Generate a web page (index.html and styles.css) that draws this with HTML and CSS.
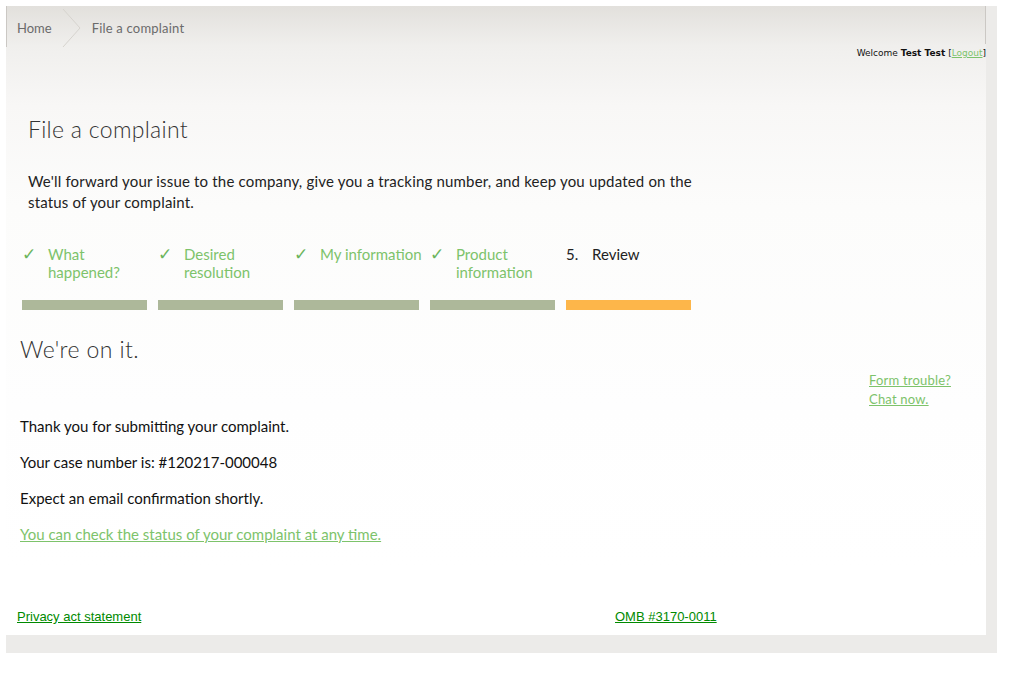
FILE: index.html
```html
<!DOCTYPE html>
<html lang="en">
<head>
    <meta charset="UTF-8">
    <title>File a complaint</title>
    <link rel="stylesheet" href="styles.css">
</head>
<body>
    <div class="frame">
        <div class="main">
            <div class="header">
                <div class="breadcrumb">
                    <a class="crumb" href="#">Home</a>
                    <svg class="crumb-sep" width="20" height="38" viewBox="0 0 20 38">
                        <polyline points="1,0 18,19 1,38" fill="none" stroke="#d6d3ce" stroke-width="1"/>
                    </svg>
                    <span class="crumb current">File a complaint</span>
                </div>
                <div class="welcome">Welcome <b>Test Test</b> [<a href="#">Logout</a>]</div>
            </div>

            <div class="intro">
                <h1>File a complaint</h1>
                <p>We'll forward your issue to the company, give you a tracking number, and keep you updated on the status of your complaint.</p>
            </div>

            <div class="steps">
                <div class="step done"><span class="mark">&#10003;</span><span class="label">What happened?</span><div class="bar"></div></div>
                <div class="step done"><span class="mark">&#10003;</span><span class="label">Desired resolution</span><div class="bar"></div></div>
                <div class="step done"><span class="mark">&#10003;</span><span class="label">My information</span><div class="bar"></div></div>
                <div class="step done"><span class="mark">&#10003;</span><span class="label">Product information</span><div class="bar"></div></div>
                <div class="step current"><span class="mark">5.</span><span class="label">Review</span><div class="bar"></div></div>
            </div>

            <div class="content">
                <div class="result">
                    <h2>We're on it.</h2>
                    <p>Thank you for submitting your complaint.</p>
                    <p>Your case number is: #120217-000048</p>
                    <p>Expect an email confirmation shortly.</p>
                    <p><a class="status-link" href="#">You can check the status of your complaint at any time.</a></p>
                </div>
                <div class="help">
                    <a href="#">Form trouble?</a>
                    <a href="#">Chat now.</a>
                </div>
            </div>

            <div class="footer">
                <a class="privacy" href="#">Privacy act statement</a>
                <a class="omb" href="#">OMB #3170-0011</a>
            </div>
        </div>
        <div class="bottom"></div>
    </div>
</body>
</html>
```

FILE: styles.css
```css
body {
    margin: 0;
    background-color: #fff;
    font-family: Lato, "Open Sans", sans-serif;
    color: #111;
}
.frame {
    margin: 6px 0 0 6px;
    width: 991px;
    background-color: #ecebe9;
}
.main {
    width: 980px;
    background: linear-gradient(#e2e0dc 0px, #f0efed 40px, #f8f7f6 100px, #fcfcfb 200px, #fefefe 400px, #fff 560px);
}
.header {
    height: 70px;
    position: relative;
}
.breadcrumb {
    display: flex;
    align-items: center;
    height: 38px;
    padding-top: 3px;
    border-left: 1px solid #cbc8c4;
}
.crumb {
    font-size: 13px;
    color: #6b6b6b;
    text-decoration: none;
    padding: 0 12px 0 10px;
}
.crumb-sep {
    display: block;
    margin-left: -2px;
}
.crumb.current {
    padding-left: 10px;
    letter-spacing: 0.2px;
}
.header::after {
    content: "";
    position: absolute;
    right: 0;
    top: 0;
    height: 38px;
    border-right: 1px solid #cbc8c4;
}
.welcome {
    text-align: right;
    padding-top: 1px;
    font-family: "DejaVu Sans", Verdana, sans-serif;
    font-size: 9px;
    color: #111;
}
.welcome a {
    color: #7cc36b;
}
.intro {
    padding: 39px 0 0 22px;
    width: 700px;
}
.intro h1 {
    font-size: 23px;
    font-weight: 300;
    letter-spacing: 0.3px;
    color: #333;
    margin: 0 0 28px 0;
}
.intro p {
    font-size: 15px;
    line-height: 21px;
    letter-spacing: 0.18px;
    color: #222;
    margin: 0;
}
.steps {
    display: flex;
    padding: 32px 0 0 16px;
}
.step {
    width: 136px;
    display: grid;
    grid-template-columns: 26px 1fr;
    font-size: 15px;
    line-height: 18px;
}
.step .mark {
    color: #6cb55d;
    font-family: "DejaVu Sans", sans-serif;
    font-size: 17px;
    font-weight: bold;
}
.step .label {
    color: #7dc36b;
    height: 36px;
    padding-right: 4px;
}
.step.current .mark {
    font-family: Lato, sans-serif;
    font-size: 15px;
    font-weight: normal;
}
.step.current .mark,
.step.current .label {
    color: #222;
}
.step .bar {
    grid-column: 1 / 3;
    width: 125px;
    height: 10px;
    margin-top: 19px;
    background-color: #adb89a;
}
.step.current .bar {
    background-color: #fdb64a;
}
.content {
    display: flex;
    padding: 25px 0 0 14px;
}
.result {
    width: 849px;
}
.result h2 {
    font-size: 23px;
    font-weight: 300;
    letter-spacing: 0.4px;
    color: #333;
    margin: 0 0 53px 0;
}
.result p {
    font-size: 15px;
    line-height: 20px;
    margin: 0 0 16px 0;
}
.status-link {
    color: #7dc36b;
}
.help {
    display: flex;
    flex-direction: column;
    padding-top: 36px;
    font-size: 13px;
    line-height: 19px;
    letter-spacing: 0.2px;
}
.help a {
    color: #7dc36b;
}
.footer {
    display: flex;
    padding: 49px 0 11px 11px;
    font-family: "Liberation Sans", Arial, sans-serif;
    font-size: 13px;
}
.footer a {
    color: #008a00;
}
.privacy {
    width: 598px;
}
.bottom {
    height: 18px;
}
```
